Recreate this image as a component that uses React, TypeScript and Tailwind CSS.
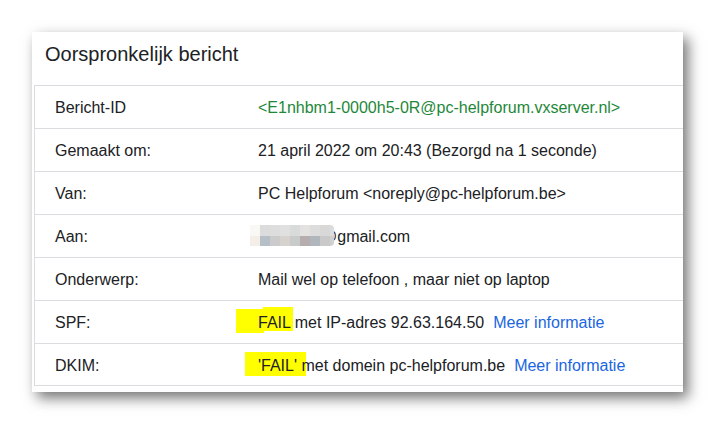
import React from "react";

const font = { fontFamily: '"Liberation Sans", Arial, sans-serif' };

function Row({ label, children }: { label: string; children: React.ReactNode }) {
  return (
    <div className="relative flex h-[43px] items-center border-t border-[#dadce0] pt-[2px]">
      <div className="w-[223px] shrink-0 pl-[20px] text-[16px] leading-[18px] text-[#202124]">{label}</div>
      <div className="relative z-10 flex items-center text-[16px] leading-[18px] text-[#202124]">{children}</div>
    </div>
  );
}

const row1 = ["#faf8f5", "#dcdcdc", "#dddddd", "#e0e0e0", "#d9dbdb", "#e4e2e0", "#dcdcdc", "#d8d8d8"];
const row2 = ["#f4eee9", "#b6bfc7", "#cbcbcb", "#d6d2ce", "#c9cbcb", "#b6aeae", "#b0b6bb", "#c9c9c9"];

export default function App() {
  return (
    <div className="w-[715px] h-[426px] bg-white pt-[32px] pl-[32px]" style={font}>
      <div className="w-[651px] bg-white pb-[6px] shadow-[5px_6px_13px_rgba(0,0,0,0.55)]">
        <div className="pl-[13px] pt-[11px] pb-[19px] text-[20px] leading-[23px] text-[#202124]">Oorspronkelijk bericht</div>
        <div className="ml-[2px] border-l border-[#dadce0]">
          <Row label="Bericht-ID">
            <span className="text-[#1e873a]">&lt;E1nhbm1-0000h5-0R@pc-helpforum.vxserver.nl&gt;</span>
          </Row>
          <Row label="Gemaakt om:">
            <span>21 april 2022 om 20:43 (Bezorgd na 1 seconde)</span>
          </Row>
          <Row label="Van:">
            <span>PC Helpforum &lt;noreply@pc-helpforum.be&gt;</span>
          </Row>
          <div className="relative flex h-[43px] items-center border-t border-[#dadce0] pt-[2px]">
            <div className="w-[223px] shrink-0 pl-[20px] text-[16px] leading-[18px] text-[#202124]">Aan:</div>
            <div className="pl-[63px] text-[16px] leading-[18px] text-[#202124]">@gmail.com</div>
            <div className="absolute left-[215px] top-[10px] flex flex-col">
              <div className="flex">
                {row1.map((c, i) => (
                  <div key={i} className="h-[11px] w-[10px]" style={{ backgroundColor: c }} />
                ))}
                <div className="h-[11px] w-[4px] rounded-tr-[4px] bg-[#dcdcdc]" />
              </div>
              <div className="flex">
                {row2.map((c, i) => (
                  <div key={i} className="h-[10px] w-[10px]" style={{ backgroundColor: c }} />
                ))}
                <div className="h-[10px] w-[4px] rounded-br-[4px] bg-[#d0d0d0]" />
              </div>
            </div>
          </div>
          <Row label="Onderwerp:">
            <span>Mail wel op telefoon , maar niet op laptop</span>
          </Row>
          <div className="relative flex h-[43px] items-center border-t border-[#dadce0] pt-[2px]">
            <div className="absolute left-[201px] top-[8px] h-[24px] w-[28px] bg-[#ffff00]" />
            <div className="absolute left-[228px] top-[6px] h-[24px] w-[30px] bg-[#ffff00]" />
            <div className="w-[223px] shrink-0 pl-[20px] text-[16px] leading-[18px] text-[#202124]">SPF:</div>
            <div className="relative z-10 text-[16px] leading-[18px] text-[#202124]">
              FAIL met IP-adres 92.63.164.50
              <span className="ml-[9px] text-[#1a66e0]">Meer informatie</span>
            </div>
          </div>
          <div className="relative flex h-[43px] items-center border-y border-[#dadce0] pt-[2px]">
            <div className="absolute left-[210px] top-[8px] h-[24px] w-[61px] bg-[#ffff00]" />
            <div className="w-[223px] shrink-0 pl-[20px] text-[16px] leading-[18px] text-[#202124]">DKIM:</div>
            <div className="relative z-10 text-[16px] leading-[18px] text-[#202124]">
              'FAIL' met domein pc-helpforum.be
              <span className="ml-[9px] text-[#1a66e0]">Meer informatie</span>
            </div>
          </div>
        </div>
      </div>
    </div>
  );
}
